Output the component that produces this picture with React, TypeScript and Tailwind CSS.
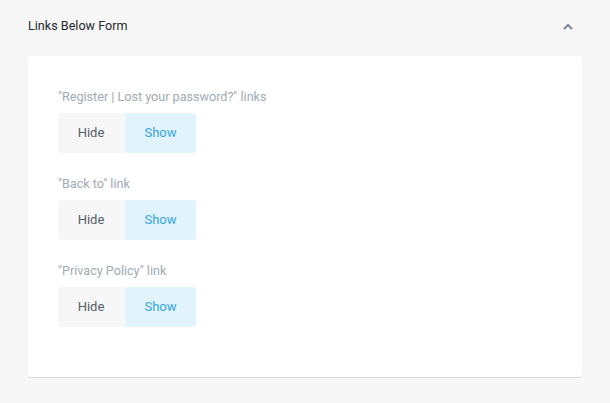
const groups = [
  '"Register | Lost your password?" links',
  '"Back to" link',
  '"Privacy Policy" link',
];

const Toggle = () => (
  <div className="flex h-[40px] w-[138px] rounded-[4px] overflow-hidden text-[13px]">
    <button className="w-[66px] bg-[#f7f7f7] text-[#555d66]">Hide</button>
    <div className="w-px bg-white" />
    <button className="flex-1 bg-[#e1f4fd] text-[#33a5e5]">Show</button>
  </div>
);

export default function App() {
  return (
    <div
      className="w-[610px] h-[403px] bg-[#f7f7f7] overflow-hidden"
      style={{ fontFamily: "Roboto, 'Liberation Sans', sans-serif" }}
    >
      {/* Header */}
      <div className="flex items-center justify-between pl-[28px] pr-[37px] h-[52px] pt-[1px]">
        <h2 className="text-[12.6px] text-[#23282d]">Links Below Form</h2>
        <svg width="10" height="6" viewBox="0 0 10 6" fill="none">
          <path d="M1 5 L5 1 L9 5" stroke="#7d8694" strokeWidth="2" />
        </svg>
      </div>

      {/* Card */}
      <div className="mx-[28px] mt-[4px] h-[321px] bg-white rounded-[3px] shadow-[0_1px_1px_rgba(0,0,0,0.12)] pt-[30px] pl-[30px]">
        <div className="flex flex-col gap-[20px]">
          {groups.map((g, i) => (
            <div key={i} className="flex flex-col gap-[5px]">
              <p className="text-[12.6px] leading-[22px] text-[#a0abb3]">{g}</p>
              <Toggle />
            </div>
          ))}
        </div>
      </div>
    </div>
  );
}
